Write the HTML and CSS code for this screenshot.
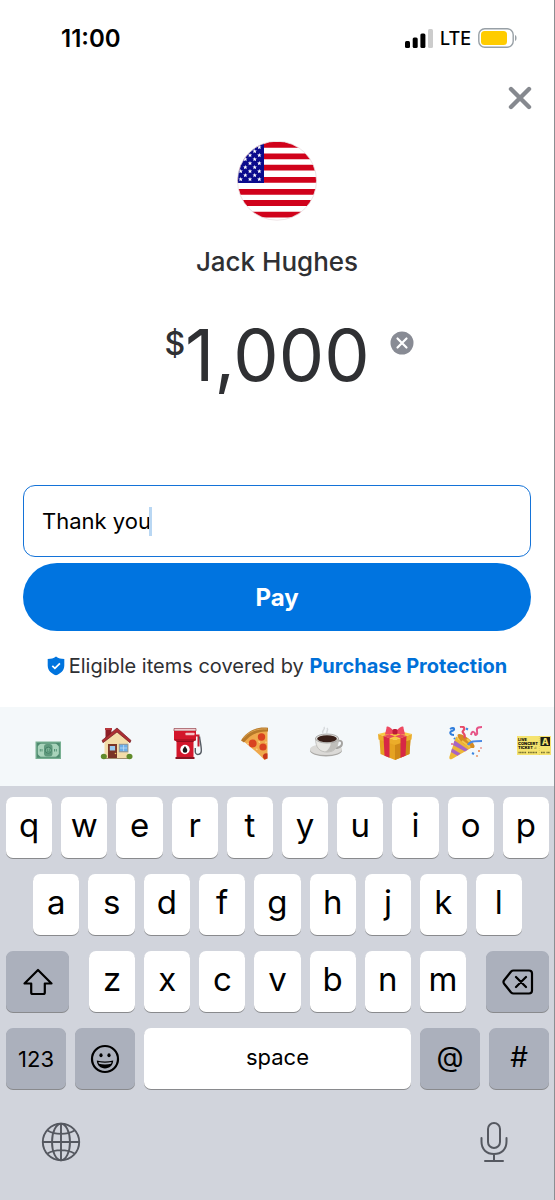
FILE: index.html
```html
<!DOCTYPE html>
<html lang="en">
<head>
    <meta charset="UTF-8">
    <meta name="viewport" content="width=device-width, initial-scale=1.0">
    <title>Pay</title>
    <link rel="stylesheet" href="styles.css">
</head>
<body>

<div class="status-bar">
    <span class="time">11:00</span>
    <div class="status-icons">
        <svg width="28" height="19" viewBox="0 0 28 19">
            <rect x="0" y="12" width="5" height="7" rx="1.5"/>
            <rect x="7.7" y="8.5" width="5" height="10.5" rx="1.5"/>
            <rect x="15.4" y="4.5" width="5" height="14.5" rx="1.5"/>
            <rect x="23" y="0" width="5" height="19" rx="1.5" fill="#ccc"/>
        </svg>
        <span class="network">LTE</span>
        <svg width="40" height="20" viewBox="0 0 40 20">
            <rect x=".8" y=".8" width="34.4" height="18.4" rx="6" fill="none" stroke="#98a0a6" stroke-width="1.4"/>
            <rect x="3" y="3" width="26" height="14" rx="3.5" fill="#ffcc00"/>
            <path d="M37 7c2 .6 2 5.400 0 6z" fill="#98a0a6"/>
        </svg>
    </div>
</div>

<main class="payment">
    <div class="toolbar">
        <button class="close-btn" type="button" aria-label="Close">
            <svg width="24" height="24" viewBox="0 0 24 24"><path d="M3 3l18 18M21 3L3 21" stroke="#86898f" stroke-width="4.400" stroke-linecap="round"/></svg>
        </button>
    </div>

    <svg class="avatar" width="80" height="80" viewBox="0 0 80 80">
        <defs>
            <clipPath id="round"><circle cx="40" cy="39.700" r="39.500"/></clipPath>
            <path id="star" d="M0-2.300L.6-.8 2.200-.7 1 .3 1.400 1.900 0 1-1.400 1.900-1 .3-2.200-.7-.6-.8z" fill="#fff"/>
        </defs>
        <g clip-path="url(#round)">
            <rect width="80" height="80" fill="#fff"/>
            <path d="M0 3.900h80M0 15.300h80M0 26.700h80M0 38.900h80M0 50.900h80M0 62h80M0 73.700h80" stroke="#d0021b" stroke-width="5.800"/>
            <rect width="27" height="42" fill="#0b0b8c"/>
            <use href="#star" x="22.300" y="6.300"/>
            <use href="#star" x="17.700" y="10.300"/>
            <use href="#star" x="13" y="14.300"/><use href="#star" x="22.300" y="14.300"/>
            <use href="#star" x="8.300" y="18.300"/><use href="#star" x="17.700" y="18.300"/>
            <use href="#star" x="13" y="22.300"/><use href="#star" x="22.300" y="22.300"/>
            <use href="#star" x="8.300" y="26.300"/><use href="#star" x="17.700" y="26.300"/>
            <use href="#star" x="3.700" y="30.300"/><use href="#star" x="13" y="30.300"/><use href="#star" x="22.300" y="30.300"/>
            <use href="#star" x="8.300" y="34.300"/><use href="#star" x="17.700" y="34.300"/>
            <use href="#star" x="3.700" y="38.300"/><use href="#star" x="13" y="38.300"/><use href="#star" x="22.300" y="38.300"/>
        </g>
        <circle cx="40" cy="39.700" r="39.500" fill="none" stroke="#eadde0" stroke-width=".8"/>
    </svg>

    <h1 class="name">Jack Hughes</h1>

    <div class="amount">
        <span class="currency">$</span>
        <span class="value">1,000</span>
        <button class="clear-btn" type="button" aria-label="Clear amount">
            <svg width="24" height="24" viewBox="0 0 24 24"><circle cx="12" cy="12" r="11.500" fill="#888b94"/><path d="M7.500 7.500l9 9M16.500 7.500l-9 9" stroke="#fff" stroke-width="2.200" stroke-linecap="round"/></svg>
        </button>
    </div>

    <form class="pay-form">
        <label class="note">
            <input class="note-input" type="text" value="Thank you" size="9" aria-label="Note">
            <span class="caret"></span>
        </label>
        <button class="pay-btn" type="button">Pay</button>
    </form>

    <p class="protection">
        <svg width="18" height="20" viewBox="0 0 18 20"><path d="M9 .5c2.500 1.800 5 2.500 8.300 2.500v6.500c0 5-3.800 8.300-8.300 9.800C4.500 17.800.7 14.500.7 9.500V3C4 3 6.500 2.300 9 .5z" fill="#0074de"/><path d="M5.300 9.800l2.600 2.500 5-5" fill="none" stroke="#fff" stroke-width="1.800"/></svg>
        <span>Eligible items covered by <a href="#">Purchase Protection</a></span>
    </p>
</main>

<div class="emoji-bar">
    <button type="button" aria-label="Cash">
        <svg width="34" height="34" viewBox="0 0 34 34">
            <rect x="4.500" y="15.500" width="25.500" height="17.500" fill="#78b092"/>
            <rect x="6.300" y="17.200" width="22" height="14" fill="#a9d3bb" stroke="#4f8b70" stroke-width=".9"/>
            <path d="M6 17h4l-4 4zM28.500 17v4l-4-4zM6 31.500v-4l4 4zM28.500 31.500h-4l4-4z" fill="#4f8b70"/>
            <rect x="13" y="18" width="8.500" height="12.500" rx="3" fill="#5e987c"/>
            <circle cx="17.300" cy="24.200" r="3" fill="#83b99c" stroke="#37745a" stroke-width=".8"/>
            <path d="M16.300 22.500v3.400h2v-3.400M9.300 23v2.500M11 23v2.500M23.500 23v2.500M25.300 23v2.500" fill="none" stroke="#4f8b70" stroke-width=".9"/>
        </svg>
    </button>
    <button type="button" aria-label="House">
        <svg width="34" height="34" viewBox="0 0 34 34">
            <path d="M5.500 2.500h6v11h-6z" fill="#8e1f26"/>
            <path d="M5 2h7v2H5z" fill="#b5373c"/>
            <path d="M4.500 13.500L17 4l11.500 10v19h-24z" fill="#f3dca9"/>
            <path d="M17 2L2 14.500l1 2.200L17 6l13 10.700 1-2.200z" fill="#ad2e33" stroke="#6e1b20" stroke-width=".7"/>
            <rect x="8" y="18" width="9" height="15" fill="#7b3426"/>
            <rect x="9.800" y="20" width="5.300" height="4.500" fill="#9bc9ee"/>
            <circle cx="15.500" cy="27.500" r=".8" fill="#f2c45a"/>
            <rect x="18.800" y="17.800" width="9.500" height="8.500" fill="#8c9aa4"/>
            <rect x="20" y="19" width="7.200" height="6" fill="#6caee8"/>
            <path d="M23.600 19v6M20 22h7" stroke="#d9edfa" stroke-width=".6"/>
            <path d="M4 33h26v-1H4z" fill="#a08b6c"/>
            <ellipse cx="3.800" cy="30.500" rx="3" ry="2.800" fill="#608b2b"/>
            <ellipse cx="29.500" cy="30.500" rx="3" ry="2.800" fill="#608b2b"/>
        </svg>
    </button>
    <button type="button" aria-label="Fuel pump">
        <svg width="34" height="34" viewBox="0 0 34 34">
            <path d="M4 2.500h22v2.500H4z" fill="#efcfd2" stroke="#8c2c34" stroke-width=".6"/>
            <path d="M4 5h22v9l-2.500 1.500v16h-17v-16L4 14z" fill="#d3162b"/>
            <path d="M4.500 14h21.300M6.500 15.500h17" stroke="#8b0c1b" stroke-width=".9"/>
            <rect x="15.500" y="6.800" width="9" height="2.500" rx=".5" fill="#f4c0c4"/>
            <rect x="5.500" y="31" width="19" height="2" fill="#871421"/>
            <circle cx="15" cy="23.500" r="4.700" fill="#fff"/>
            <path d="M15 20c1 1.700 2.300 2.800 2.300 4.400a2.300 2.300 0 0 1-4.600 0c0-1.600 1.300-2.700 2.300-4.400z" fill="#171717"/>
            <path d="M26 9.500h2.500v11" fill="none" stroke="#c61c2e" stroke-width="2"/>
            <path d="M29.500 10.500c.5 5 2 10 1.800 14.500 0 4-5.500 4.800-6 1v-4" fill="none" stroke="#555b62" stroke-width="1.400"/>
        </svg>
    </button>
    <button type="button" aria-label="Pizza">
        <svg width="34" height="34" viewBox="0 0 34 34">
            <path d="M3 14C9.500 5 18.500 2 28.500 3v29.500l-3 1.500C18 26 10 20 3 14z" fill="#efa94c"/>
            <path d="M2 14.500C7.500 5 18.500.2 29 1.800V5.500C19 5 11.500 8.500 5 16.500z" fill="#b77929"/>
            <path d="M4 12.500C10 5.500 18 2.300 28 3" fill="none" stroke="#daa353" stroke-width="1"/>
            <circle cx="22.500" cy="11" r="3.700" fill="#d94320"/>
            <circle cx="13.700" cy="17.500" r="3.900" fill="#d94320"/>
            <circle cx="24" cy="21" r="3.600" fill="#d94320"/>
            <path d="M28.500 27.500a3.300 3.300 0 0 0-4.500 4l1.500 2 3-1z" fill="#c7381a"/>
            <path d="M19.500 15.500l1.500 1M17 23l1.500.5M8.500 17l1 .7M27 15.500v1.500" stroke="#ffd989" stroke-width="1.200"/>
        </svg>
    </button>
    <button type="button" aria-label="Coffee">
        <svg width="34" height="34" viewBox="0 0 34 34">
            <path d="M14 7c-2-3 3-3 1-6M18 7c-1-2 2-2.500 0-5" fill="none" stroke="#d7dadd" stroke-width="1.500"/>
            <ellipse cx="17" cy="24.500" rx="16" ry="6" fill="#aaa9a6"/>
            <ellipse cx="17" cy="23.500" rx="16" ry="5.500" fill="#dbdad7"/>
            <path d="M29 15c5-2 5.500 5 .5 6.500-2 .7-3 .4-4 .4" fill="none" stroke="#a5a4a1" stroke-width="1.900"/>
            <path d="M6.500 12.500c0 9 4 13.500 11.500 13.500s11.500-4.500 11.500-13.500z" fill="#e8e7e3" stroke="#aaa9a6" stroke-width=".6"/>
            <path d="M22 16c-.5 5-2.500 8-6 9.800 9 1 13-4.500 13.300-11z" fill="#c0bfbb"/>
            <ellipse cx="18" cy="12.500" rx="11.500" ry="4.500" fill="#e5e4e1" stroke="#8d8c89" stroke-width=".7"/>
            <ellipse cx="18" cy="12.700" rx="9.900" ry="3.500" fill="#382019"/>
        </svg>
    </button>
    <button type="button" aria-label="Gift">
        <svg width="34" height="34" viewBox="0 0 34 34">
            <path d="M1.500 13L17 17.500V34L2.500 28zM32.500 13L17 17.500V34l14.500-6z" fill="#e5a322"/>
            <path d="M17 17.500L32.500 13l-1 15L17 34z" fill="#cf8917"/>
            <path d="M0 8l17-4 17 4-17 6z" fill="#f8cb43"/>
            <path d="M0 8l17 6v5L.5 13.500zM34 8l-17 6v5l16.500-5.500z" fill="#ebad2a"/>
            <path d="M5.500 10l6 2.200v19.500l-5-2zM28.500 10l-6 2.200v19.500l5-2z" fill="#d72845"/>
            <path d="M5.500 10l16-4.500 5 1.500-15 5.200zM28.500 10L12.500 5.500l-5 1.500 15 5.200z" fill="#e74a5c"/>
            <path d="M16 5C11-.5 8-.5 8.500 2L7 8.500c4 0 7-.5 9.500-2zM18 5c5-5.500 8-5.500 7.500-3L27 8.500c-4 0-7-.5-9.500-2z" fill="#ee4960"/>
            <rect x="14.500" y="3" width="5" height="5.500" rx="1.500" fill="#bd1b38"/>
        </svg>
    </button>
    <button type="button" aria-label="Party">
        <svg width="34" height="34" viewBox="0 0 34 34">
            <path d="M8 10.500L26.500 20 4 33c-2 1-3.200-.3-2.500-2.500z" fill="#eeb735"/>
            <path d="M6.500 14.500L20 23.500l-3 2L5 19zM4 22.500l8.500 5-3 2.200L3 26z" fill="#a765c4"/>
            <path d="M10 11l16.500 9-3.500 1.500L9.500 13z" fill="#f7db70"/>
            <ellipse cx="18" cy="15" rx="3.500" ry="10.500" transform="rotate(-52 18 15)" fill="#d58c22"/>
            <path d="M14 15l8 6M19 13l3 3" stroke="#f3c54c" stroke-width="2"/>
            <path d="M2 3c5-3 5 1 2 2s-2 4 2 4" fill="none" stroke="#317edc" stroke-width="2"/>
            <path d="M12 1c5-1 5 2 3 4s4 3 1 7" fill="none" stroke="#e84a68" stroke-width="2.200"/>
            <path d="M23 9c1-5 4-3 4-1s3 1 2-3 3-4 5-4" fill="none" stroke="#e65587" stroke-width="2"/>
            <path d="M20 19c2-4 7-4 14-4" fill="none" stroke="#4b89e4" stroke-width="2.200"/>
            <path d="M18 2.500l2 1M6 12l1 1M24 27l2 1" stroke="#3c86df" stroke-width="2"/>
            <circle cx="31" cy="25" r="1" fill="#e97a41"/><circle cx="29" cy="30" r="1.100" fill="#e69c72"/><circle cx="33" cy="22" r=".8" fill="#d55"/><circle cx="4" cy="18" r="1" fill="#e46286"/>
        </svg>
    </button>
    <button type="button" aria-label="Concert ticket">
        <svg width="34" height="34" viewBox="0 0 34 34">
            <rect x="0" y="10" width="34" height="19" fill="#f5e36e"/>
            <path d="M22.300 10v19" stroke="#d5c250" stroke-width=".6" stroke-dasharray="1 1"/>
            <text class="ticket-text" x="1" y="15">LIVE</text>
            <text class="ticket-text" x="1" y="19">CONCERT</text>
            <text class="ticket-text" x="1" y="23">TICKET ♫</text>
            <rect x="23.500" y="11" width="9.500" height="9" fill="#1e1e18"/>
            <text class="ticket-zone" x="28.300" y="19">A</text>
            <path d="M1.500 26.500h8M11 26.500h9M24 26.500h4M29.500 26.500h3.500" stroke="#77702f" stroke-width="1.400" stroke-dasharray="1.200 .4"/>
        </svg>
    </button>
</div>

<div class="keyboard">
    <div class="key-row">
        <button class="key">q</button>
        <button class="key">w</button>
        <button class="key">e</button>
        <button class="key">r</button>
        <button class="key">t</button>
        <button class="key">y</button>
        <button class="key">u</button>
        <button class="key">i</button>
        <button class="key">o</button>
        <button class="key">p</button>
    </div>
    <div class="key-row inset">
        <button class="key">a</button>
        <button class="key">s</button>
        <button class="key">d</button>
        <button class="key">f</button>
        <button class="key">g</button>
        <button class="key">h</button>
        <button class="key">j</button>
        <button class="key">k</button>
        <button class="key">l</button>
    </div>
    <div class="key-row wide-gap">
        <button class="key dark shift" aria-label="Shift">
            <svg width="32" height="28" viewBox="0 0 32 28"><path d="M16 2L2.500 15.500h6.700v9c0 .9.600 1.500 1.500 1.500h10.600c.9 0 1.500-.6 1.500-1.500v-9h6.700z" fill="none" stroke="#000" stroke-width="2.200" stroke-linejoin="round"/></svg>
        </button>
        <div class="key-row letters">
            <button class="key">z</button>
            <button class="key">x</button>
            <button class="key">c</button>
            <button class="key">v</button>
            <button class="key">b</button>
            <button class="key">n</button>
            <button class="key">m</button>
        </div>
        <button class="key dark shift" aria-label="Delete">
            <svg width="32" height="28" viewBox="0 0 32 28"><path d="M11.500 2.500h15.500c2 0 3 1 3 3v17c0 2-1 3-3 3H11.500c-1 0-1.700-.3-2.400-1L2.300 16c-1-1.200-1-2.800 0-4l6.800-8.500c.7-.7 1.400-1 2.400-1zM14 9l10 10M24 9l-10 10" fill="none" stroke="#000" stroke-width="2.200" stroke-linecap="round" stroke-linejoin="round"/></svg>
        </button>
    </div>
    <div class="key-row">
        <button class="key dark small">123</button>
        <button class="key dark small" aria-label="Emoji">
            <svg width="30" height="30" viewBox="0 0 30 30"><circle cx="15" cy="15" r="13" fill="none" stroke="#000" stroke-width="2.200"/><ellipse cx="11" cy="11.300" rx="1.600" ry="2" /><ellipse cx="19" cy="11.300" rx="1.600" ry="2"/><path d="M6.800 16.500c5 1.300 11.400 1.300 16.400 0-.2 5-3.700 7.900-8.200 7.900s-8-2.900-8.200-7.900z"/><path d="M8.400 18c4 1 9.200 1 13.200 0l-.6 1.800c-3.500 1-8.500 1-12 0z" fill="#abb0bc"/></svg>
        </button>
        <button class="key space">space</button>
        <button class="key dark small symbol">@</button>
        <button class="key dark small symbol">#</button>
    </div>
    <div class="bottom-row">
        <button class="icon-btn" aria-label="Change keyboard">
            <svg width="40" height="40" viewBox="0 0 40 40" fill="none" stroke="#555860" stroke-width="1.900"><circle cx="20" cy="20" r="18.200"/><ellipse cx="20" cy="20" rx="9" ry="18.200"/><path d="M20 2v36M2 20h36M6.500 8.500c7.500 4.500 19.500 4.500 27 0M6.500 31.500c7.500-4.500 19.500-4.500 27 0"/></svg>
        </button>
        <button class="icon-btn" aria-label="Dictation">
            <svg width="40" height="42" viewBox="0 0 40 42" fill="none" stroke="#555860" stroke-width="2" stroke-linecap="round"><rect x="14" y="2" width="12" height="25" rx="6"/><path d="M7.500 17v3.500c0 8 5 12.500 12.500 12.500s12.500-4.500 12.500-12.500V17M20 33v7M11 40h18"/></svg>
        </button>
    </div>
</div>

</body>
</html>
```
FILE: styles.css
```css
* {
    box-sizing: border-box;
}
body {
    display: flex;
    flex-direction: column;
    min-height: 100vh;
    margin: 0;
    border-right: 1px solid #8b8e92;
    background-color: #fff;
    color: #2f3033;
    font-family: Inter, "Liberation Sans", sans-serif;
}
button {
    margin: 0;
    padding: 0;
    border: 0;
    background: none;
    color: #000;
    font-family: inherit;
}
svg {
    display: block;
    flex: none;
}

/* status bar */
.status-bar {
    display: flex;
    align-items: center;
    justify-content: space-between;
    height: 76px;
    padding: 0 36px 0 61px;
    color: #000;
}
.time {
    font-size: 24px;
    font-weight: 600;
}
.status-icons {
    display: flex;
    align-items: center;
    gap: 7px;
}
.network {
    font-size: 18px;
    font-weight: 500;
}

/* payment */
.payment {
    display: flex;
    flex-direction: column;
    align-items: center;
    padding: 0 23px 29px;
}
.toolbar {
    display: flex;
    align-self: stretch;
    justify-content: flex-end;
    margin-right: -11px;
}
.close-btn {
    display: grid;
    place-items: center;
    width: 44px;
    height: 44px;
}
.avatar {
    margin-top: 21px;
}
.name {
    margin: 25px 0 0;
    font-size: 26px;
    font-weight: 500;
    line-height: 32px;
}
.amount {
    display: flex;
    align-items: flex-start;
    margin-top: 37px;
    padding-left: 24px;
}
.currency {
    font-size: 32px;
    font-weight: 500;
    line-height: 58px;
}
.value {
    font-size: 72px;
    font-weight: 400;
    line-height: 80px;
}
.clear-btn {
    margin: 16px 0 0 20px;
}

.pay-form {
    display: flex;
    flex-direction: column;
    gap: 6px;
    width: 100%;
    margin-top: 90px;
}
.note {
    display: flex;
    align-items: center;
    height: 72px;
    padding: 0 18px;
    border: 1px solid #1473d8;
    border-radius: 12px;
    cursor: text;
}
.note-input {
    field-sizing: content;
    padding: 0;
    border: 0;
    outline: 0;
    background: none;
    color: #000;
    font-family: inherit;
    font-size: 22px;
}
.caret {
    width: 3px;
    height: 29px;
    margin-left: -2px;
    background-color: #b9d7f3;
}
.pay-btn {
    height: 68px;
    border-radius: 34px;
    background-color: #0074e0;
    color: #fff;
    font-size: 24px;
    font-weight: 700;
}
.protection {
    display: flex;
    align-items: center;
    gap: 4px;
    margin: 23px 0 0;
    font-size: 20px;
    line-height: 24px;
    white-space: nowrap;
}
.protection a {
    color: #0070d8;
    font-weight: 700;
    text-decoration: none;
}

/* emoji suggestions */
.emoji-bar {
    display: flex;
    align-items: center;
    justify-content: space-between;
    height: 79px;
    padding: 0 3px 8px 31px;
    background-color: #f4f8fa;
}
.ticket-text {
    font-size: 4px;
    font-weight: 800;
}
.ticket-zone {
    fill: #f5e36e;
    font-size: 9px;
    font-weight: 800;
    text-anchor: middle;
}

/* keyboard */
.keyboard {
    display: flex;
    flex: 1;
    flex-direction: column;
    gap: 16px;
    padding: 11px 5px 0 6px;
    background-color: #d1d4dc;
}
.key-row {
    display: flex;
    gap: 9px;
}
.inset {
    padding: 0 5%;
}
.wide-gap {
    gap: 20px;
}
.letters {
    flex: 1;
}
.key {
    display: flex;
    flex: 1 1 0;
    align-items: center;
    justify-content: center;
    min-width: 0;
    height: 61px;
    padding-bottom: 5px;
    border-radius: 7px;
    background-color: #fff;
    box-shadow: 0 1px 0 #898a8d;
    font-size: 33px;
}
.dark {
    padding-bottom: 0;
    background-color: #abb0bc;
}
.shift {
    flex: 0 0 63px;
}
.small {
    flex: 0 0 60px;
    font-size: 22px;
}
.symbol {
    padding-bottom: 3px;
    font-size: 28px;
}
.space {
    padding-bottom: 3px;
    font-size: 22px;
}
.bottom-row {
    display: flex;
    align-items: center;
    justify-content: space-between;
    padding: 16px 35px 36px;
}
```
